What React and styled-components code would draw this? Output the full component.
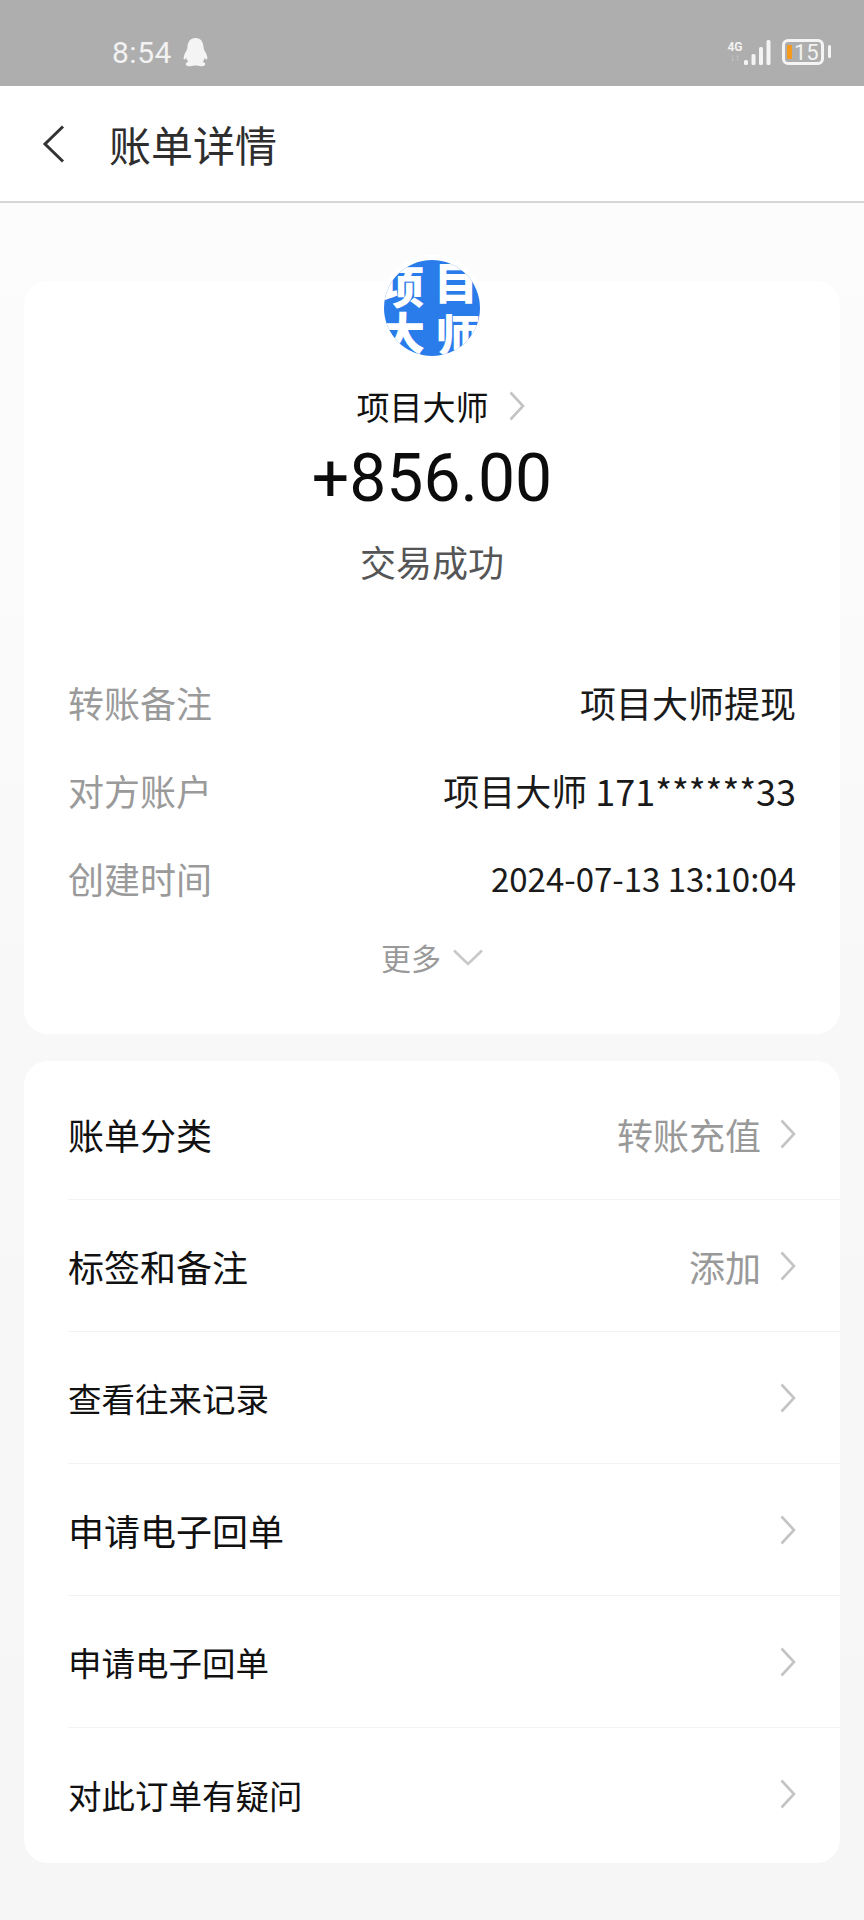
import React from 'react';
import styled, { createGlobalStyle } from 'styled-components';

const FONT = '"Noto Sans CJK SC", "Noto Sans", sans-serif';

const GlobalStyle = createGlobalStyle`
  html, body {
    margin: 0;
    padding: 0;
    background: #f7f7f7;
    font-family: ${FONT};
  }
  * { box-sizing: border-box; }
`;

const Page = styled.div`
  width: 864px;
  height: 1920px;
  overflow: hidden;
  display: flex;
  flex-direction: column;
  background: linear-gradient(#fcfcfc 0, #fcfcfc 260px, #f8f8f8 1000px, #f6f6f6 100%);
`;

// 状态栏
const StatusBar = styled.div`
  height: 86px;
  flex-shrink: 0;
  background: #aeaeae;
  display: flex;
  align-items: center;
  justify-content: space-between;
  padding: 0 40px 0 112px;
  color: #f2f2f2;
`;

const StatusLeft = styled.div`
  display: flex;
  align-items: center;
  gap: 11px;
  padding-top: 19px;
`;

const Time = styled.span`
  font-family: Roboto, sans-serif;
  font-size: 30px;
  line-height: 34px;
  letter-spacing: 0.5px;
`;

const StatusRight = styled.div`
  display: flex;
  align-items: center;
  padding-top: 18px;
`;

const NetworkLabel = styled.div`
  width: 16px;
  margin-right: 1px;
  display: flex;
  flex-direction: column;
  align-items: center;
  font-family: Roboto, sans-serif;
  font-size: 12px;
  line-height: 12px;
  font-weight: 700;
`;

const NetworkArrows = styled.span`
  opacity: 0.45;
  font-size: 10px;
  line-height: 10px;
`;

const Battery = styled.div`
  position: relative;
  width: 42px;
  height: 26px;
  margin-left: 11px;
  border: 3px solid #f4f4f4;
  border-radius: 6px;
  display: flex;
  align-items: center;
  font-family: Roboto, sans-serif;
  font-size: 22px;
  color: #f2f2f2;
  &::after {
    content: '';
    position: absolute;
    right: -10px;
    top: 3px;
    width: 3px;
    height: 13px;
    background: #f4f4f4;
    border-radius: 2px;
  }
`;

const BatteryFill = styled.span`
  width: 5px;
  height: 14px;
  margin-left: 2px;
  margin-right: 2px;
  background: #f59a1c;
  border-radius: 1px;
`;

// 标题栏
const Header = styled.header`
  height: 117px;
  flex-shrink: 0;
  background: #fff;
  border-bottom: 2px solid #d6d6d6;
  display: flex;
  align-items: center;
  padding-left: 42px;
`;

const BackButton = styled.button`
  border: 0;
  background: none;
  padding: 0;
  width: 67px;
  display: flex;
  color: #333;
`;

const Title = styled.h1`
  margin: 0;
  font-size: 42px;
  line-height: 60px;
  font-weight: 400;
  color: #2e2e2e;
`;

const Content = styled.main`
  flex: 1;
  display: flex;
  flex-direction: column;
  gap: 27px;
  padding: 78px 24px 0;
`;

const Card = styled.section`
  background: #fff;
  border-radius: 24px;
`;

const SummaryCard = styled(Card)`
  height: 753px;
  padding: 0 44px;
  display: flex;
  flex-direction: column;
  align-items: center;
`;

// 头像
const Avatar = styled.div`
  width: 96px;
  height: 96px;
  margin-top: -21px;
  flex-shrink: 0;
  border-radius: 50%;
  background: #2b7ceb;
  box-shadow: 0 0 0 5px #fff;
  overflow: hidden;
  display: grid;
  grid-template-columns: 50px 46px;
  grid-template-rows: 50px 46px;
`;

const AvatarChar = styled.span`
  color: #fff;
  font-size: 44px;
  line-height: 44px;
  font-weight: 900;
  text-align: center;
  transform: translate(${(p) => p.$dx}px, ${(p) => p.$dy}px);
`;

const NameRow = styled.div`
  margin-top: 28px;
  display: flex;
  align-items: center;
  gap: 20px;
  padding-left: 17px;
  font-size: 33px;
  line-height: 44px;
  color: #111;
`;

const Amount = styled.div`
  margin-top: 12px;
  font-family: Roboto, sans-serif;
  font-size: 66px;
  line-height: 78px;
  color: #0c0c0c;
`;

const StatusText = styled.div`
  margin-top: 17px;
  font-size: 36px;
  line-height: 52px;
  color: #555;
`;

const DetailList = styled.div`
  align-self: stretch;
  margin-top: 89px;
  display: flex;
  flex-direction: column;
  gap: 36px;
`;

const DetailRow = styled.div`
  display: flex;
  justify-content: space-between;
  align-items: center;
  height: 52px;
  font-size: 36px;
`;

const DetailLabel = styled.span`
  color: #9a9a9a;
`;

const DetailValue = styled.span`
  color: #1a1a1a;
  font-size: ${(p) => p.$size || 36}px;
`;

const MoreRow = styled.div`
  margin-top: 31px;
  display: flex;
  align-items: center;
  gap: 12px;
  font-size: 30px;
  line-height: 44px;
  color: #999;
`;

const ListCard = styled(Card)`
  height: 802px;
  padding-left: 44px;
  padding-top: 7px;
`;

const ListRow = styled.div`
  height: 132px;
  padding-right: 44px;
  display: flex;
  align-items: center;
  justify-content: space-between;
  border-bottom: ${(p) => (p.$last ? '0' : '1px solid #f3f3f3')};
`;

const RowLabel = styled.span`
  font-size: ${(p) => p.$size}px;
  color: #111;
`;

const RowSide = styled.div`
  display: flex;
  align-items: center;
  gap: 19px;
  font-size: 36px;
  color: #999;
`;

const ChevronRight = () => (
  <svg width="16" height="30" viewBox="0 0 16 30" fill="none">
    <path d="M1.5 1.5 14 15 1.5 28.5" stroke="#c4c4c4" strokeWidth="2.6" />
  </svg>
);

const ChevronDown = () => (
  <svg width="30" height="17" viewBox="0 0 30 17" fill="none">
    <path d="M1 1.5 15 15 29 1.5" stroke="#c8c8c8" strokeWidth="2.6" />
  </svg>
);

const BackIcon = () => (
  <svg width="24" height="38" viewBox="0 0 24 38" fill="none">
    <path d="M21 1.5 3 19l18 17.5" stroke="currentColor" strokeWidth="3" />
  </svg>
);

// QQ 企鹅
const PenguinIcon = () => (
  <svg width="25" height="29" viewBox="0 0 25 29" fill="#f4f4f4">
    <path d="M12.5 0C7 0 4.6 4.2 4.4 9.4 4.3 11.6 3 13 2 15.2.8 17.8.2 20.6 1 21.4c.6.5 1.6-.5 2.3-1.6.3 1.6 1 3 2.1 4-1.5.6-3 1.4-2.7 2.6.4 1.6 4 2 6.4 1.7 1-.2 1.6-.5 3.4-.5s2.4.3 3.4.5c2.4.3 6 0 6.4-1.7.3-1.2-1.2-2-2.7-2.6 1.1-1 1.8-2.4 2.1-4 .7 1.1 1.7 2.1 2.3 1.6.8-.8.2-3.6-1-6.2C22 13 20.7 11.6 20.6 9.4 20.4 4.2 18 0 12.5 0Z" />
  </svg>
);

const SignalIcon = () => (
  <svg width="27" height="27" viewBox="0 0 27 27" fill="#f4f4f4">
    <rect x="0" y="21" width="4" height="5" rx="1.5" />
    <rect x="7.5" y="15" width="4" height="11" rx="1.5" />
    <rect x="15" y="8" width="4" height="18" rx="1.5" />
    <rect x="22.5" y="1" width="4" height="25" rx="1.5" />
  </svg>
);

const details = [
  { label: '转账备注', value: '项目大师提现' },
  { label: '对方账户', value: '项目大师 171******33' },
  { label: '创建时间', value: '2024-07-13 13:10:04', size: 33 },
];

const rows = [
  { label: '账单分类', size: 36, value: '转账充值' },
  { label: '标签和备注', size: 36, value: '添加' },
  { label: '查看往来记录', size: 33.5 },
  { label: '申请电子回单', size: 36 },
  { label: '申请电子回单', size: 33.5 },
  { label: '对此订单有疑问', size: 33.5 },
];

const App = () => (
  <Page>
    <GlobalStyle />
    <StatusBar>
      <StatusLeft>
        <Time>8:54</Time>
        <PenguinIcon />
      </StatusLeft>
      <StatusRight>
        <NetworkLabel>
          4G
          <NetworkArrows>↓↑</NetworkArrows>
        </NetworkLabel>
        <SignalIcon />
        <Battery>
          <BatteryFill />
          15
        </Battery>
      </StatusRight>
    </StatusBar>
    <Header>
      <BackButton>
        <BackIcon />
      </BackButton>
      <Title>账单详情</Title>
    </Header>
    <Content>
      <SummaryCard>
        <Avatar>
          <AvatarChar $dx={-7} $dy={3}>项</AvatarChar>
          <AvatarChar $dx={-1} $dy={-1}>目</AvatarChar>
          <AvatarChar $dx={-6} $dy={-1}>大</AvatarChar>
          <AvatarChar $dx={1} $dy={1}>师</AvatarChar>
        </Avatar>
        <NameRow>
          项目大师
          <ChevronRight />
        </NameRow>
        <Amount>+856.00</Amount>
        <StatusText>交易成功</StatusText>
        <DetailList>
          {details.map((d) => (
            <DetailRow key={d.label}>
              <DetailLabel>{d.label}</DetailLabel>
              <DetailValue $size={d.size}>{d.value}</DetailValue>
            </DetailRow>
          ))}
        </DetailList>
        <MoreRow>
          更多
          <ChevronDown />
        </MoreRow>
      </SummaryCard>
      <ListCard>
        {rows.map((r, i) => (
          <ListRow key={i} $last={i === rows.length - 1}>
            <RowLabel $size={r.size}>{r.label}</RowLabel>
            <RowSide>
              {r.value}
              <ChevronRight />
            </RowSide>
          </ListRow>
        ))}
      </ListCard>
    </Content>
  </Page>
);

export default App;
